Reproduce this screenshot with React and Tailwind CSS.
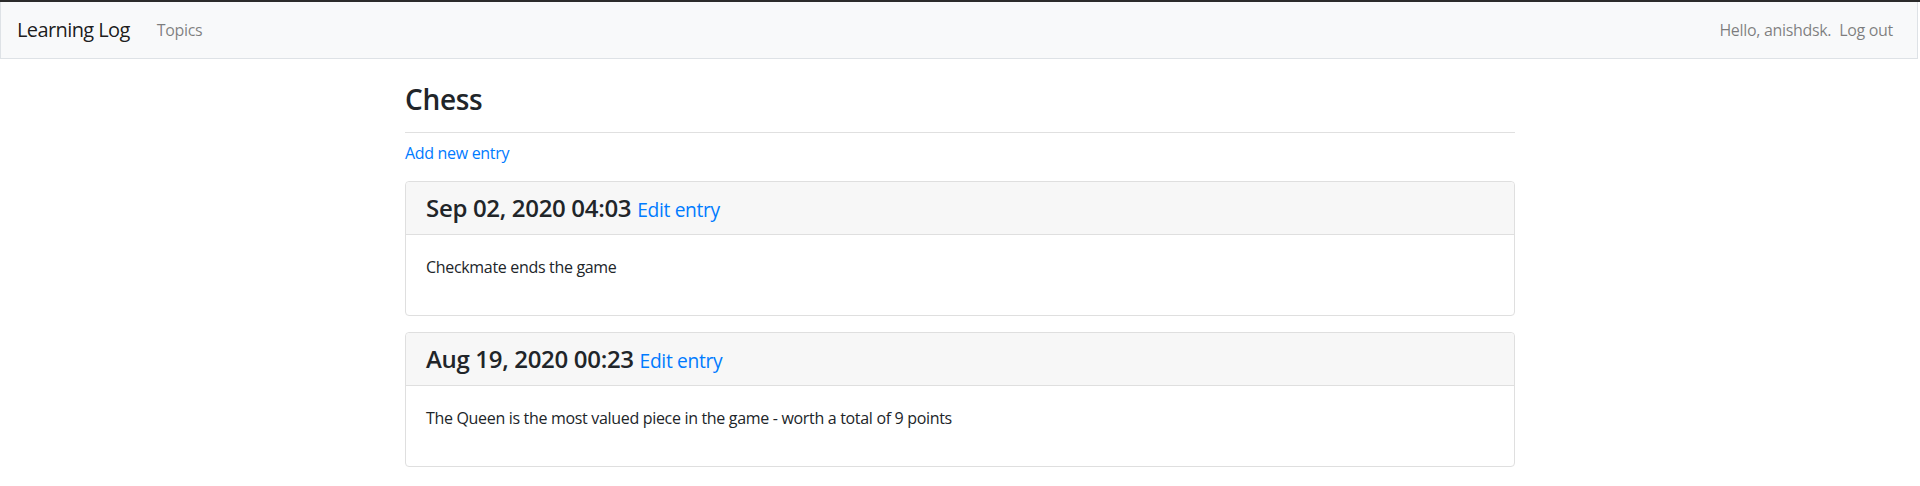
import React from "react";

const entries = [
  { date: "Sep 02, 2020 04:03", text: "Checkmate ends the game" },
  {
    date: "Aug 19, 2020 00:23",
    text: "The Queen is the most valued piece in the game - worth a total of 9 points",
  },
];

function Navbar() {
  return (
    <nav className="h-[57px] bg-[#f8f9fa] border-l border-r border-b border-[#dee2e6] mr-[2px] px-4 flex items-center justify-between">
      <div className="flex items-center">
        <a href="#" className="text-[20px] leading-[30px] text-[rgba(0,0,0,0.9)] tracking-[-0.03em] mr-[19px]">
          Learning Log
        </a>
        <a href="#" className="px-2 text-[16px] leading-6 text-[rgba(0,0,0,0.5)]">
          Topics
        </a>
      </div>
      <div className="flex items-center">
        <span className="text-[16px] leading-6 text-[rgba(0,0,0,0.5)]">Hello, anishdsk.</span>
        <a href="#" className="px-2 text-[16px] leading-6 text-[rgba(0,0,0,0.5)]">
          Log out
        </a>
      </div>
    </nav>
  );
}

function EntryCard({ date, text }) {
  return (
    <div className="border border-[#dfdfdf] rounded mb-4 bg-white">
      <div className="bg-[#f7f7f7] border-b border-[#dfdfdf] px-5 py-3 rounded-t">
        <h4 className="text-[24px] leading-[28px] font-semibold">
          {date} <small className="text-[19.2px] leading-none font-normal text-[#007bff]">Edit entry</small>
        </h4>
      </div>
      <div className="p-5">
        <p className="text-[16px] leading-6 mb-4">{text}</p>
      </div>
    </div>
  );
}

export default function App() {
  return (
    <div className="min-h-screen bg-white text-[#212529] font-['Open_Sans',sans-serif] tracking-[-0.02em]">
      <div className="h-[2px] bg-[#2b2b2b]" />
      <Navbar />
      <main className="w-[1110px] mx-auto">
        <h3 className="mt-[23px] text-[28px] leading-[34px] font-semibold">Chess</h3>
        <hr className="mt-4 border-t border-[#e0e0e0]" />
        <p className="mt-2 mb-4 text-[16px] leading-6">
          <a href="#" className="text-[#007bff]">Add new entry</a>
        </p>
        {entries.map((e) => (
          <EntryCard key={e.date} date={e.date} text={e.text} />
        ))}
      </main>
    </div>
  );
}
